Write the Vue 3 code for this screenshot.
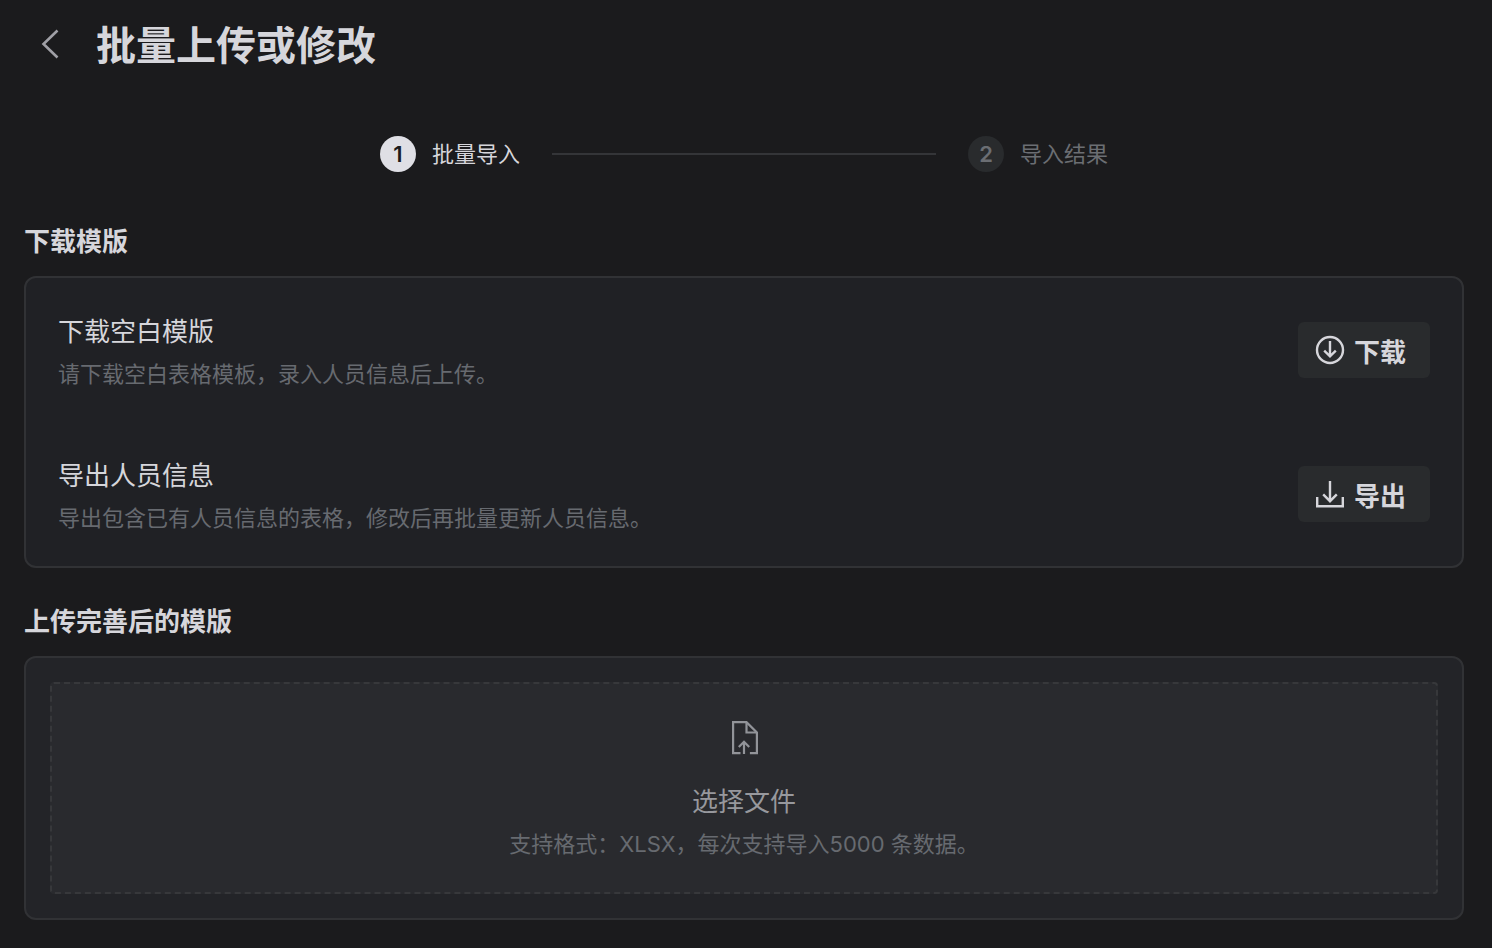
<template>
  <div class="page">
    <header class="pageHeader">
      <button class="backButton" type="button" aria-label="返回">
        <svg class="backIcon" viewBox="0 0 28 32" fill="none">
          <path d="M21.5 2.5 7.5 16l14 13.5" stroke="currentColor" stroke-width="2.6" />
        </svg>
      </button>
      <h1 class="pageTitle">批量上传或修改</h1>
    </header>

    <ol class="steps">
      <li
        v-for="(step, index) in steps"
        :key="step"
        class="step"
        :class="{ active: index === current }"
      >
        <span class="stepNumber">{{ index + 1 }}</span>
        <span class="stepLabel">{{ step }}</span>
      </li>
    </ol>

    <main>
      <section class="section">
        <h2 class="sectionTitle">下载模版</h2>
        <div class="card">
          <div v-for="item in items" :key="item.title" class="item">
            <div class="itemText">
              <h3 class="itemTitle">{{ item.title }}</h3>
              <p class="hint">{{ item.desc }}</p>
            </div>
            <button class="actionButton" type="button">
              <svg
                class="actionIcon"
                viewBox="0 0 32 32"
                fill="none"
                stroke="currentColor"
                stroke-width="2.4"
              >
                <template v-if="item.icon === 'download'">
                  <circle cx="16" cy="16" r="13" />
                  <path d="M16 7v15.5M10.2 16.6l5.8 5.8 5.8-5.8" />
                </template>
                <path v-else d="M16 3v20M9.2 16.4l6.8 6.8 6.8-6.8M3.2 19v9.2h25.6V19" />
              </svg>
              {{ item.action }}
            </button>
          </div>
        </div>
      </section>

      <section class="section">
        <h2 class="sectionTitle">上传完善后的模版</h2>
        <div class="card uploadCard">
          <label class="dropZone" @dragover.prevent @drop.prevent>
            <input class="fileInput" type="file" accept=".xlsx" />
            <svg
              class="fileIcon"
              viewBox="0 0 30 36"
              fill="none"
              stroke="currentColor"
              stroke-width="2.2"
            >
              <path d="M11.5 33.1H4.1V2.1h13.4l10.4 10.4v20.6h-7" />
              <path d="M17.5 2.1v10.4h10.4M15 34V22.5M9.8 27l5.2-5.2 5.2 5.2" />
            </svg>
            <span class="dropTitle">选择文件</span>
            <span class="hint">支持格式：XLSX，每次支持导入5000 条数据。</span>
          </label>
        </div>
      </section>
    </main>
  </div>
</template>

<script setup>
import { ref } from "vue";

const current = ref(0);
const steps = ["批量导入", "导入结果"];

const items = [
  {
    title: "下载空白模版",
    desc: "请下载空白表格模板，录入人员信息后上传。",
    action: "下载",
    icon: "download",
  },
  {
    title: "导出人员信息",
    desc: "导出包含已有人员信息的表格，修改后再批量更新人员信息。",
    action: "导出",
    icon: "export",
  },
];
</script>

<style>
body {
  margin: 0;
  background-color: #1b1b1d;
}
</style>

<style scoped>
.page {
  padding: 16px 28px 28px 24px;
  font-family: Inter, "Noto Sans CJK SC", sans-serif;
  color: #d6d6db;
}

h1,
h2,
h3,
p {
  margin: 0;
}

.pageHeader {
  display: flex;
  align-items: flex-start;
  gap: 32px;
  padding-left: 12px;
}

.backButton {
  display: flex;
  padding: 12px 0;
  border: none;
  background: none;
  color: #a0a0a6;
  cursor: pointer;
}

.backIcon {
  width: 28px;
  height: 32px;
}

.pageTitle {
  font-size: 40px;
  line-height: 60px;
  font-weight: 700;
}

.steps {
  display: flex;
  align-items: center;
  max-width: 728px;
  margin: 60px auto 48px;
  padding: 0;
  list-style: none;
}

.step {
  display: flex;
  align-items: center;
  gap: 16px;
  font-size: 22px;
  line-height: 36px;
  color: #6b6e73;
}

.step:not(:last-child) {
  flex: 1;
}

.step:not(:last-child)::after {
  content: "";
  flex: 1;
  height: 2px;
  margin: 0 32px 0 16px;
  background-color: #343538;
}

.stepNumber {
  width: 36px;
  height: 36px;
  border-radius: 50%;
  background-color: #292b2d;
  text-align: center;
  font-weight: 600;
}

.active {
  color: #d6d6db;
}

.active .stepNumber {
  background-color: #dfdfe5;
  color: #1b1b1d;
}

.section + .section {
  margin-top: 32px;
}

.sectionTitle {
  margin-bottom: 12px;
  font-size: 26px;
  line-height: 44px;
  font-weight: 700;
}

.card {
  border: 2px solid #313235;
  border-radius: 12px;
  background-color: #202125;
}

.item {
  display: flex;
  align-items: center;
  justify-content: space-between;
  padding: 32px;
}

.itemTitle {
  margin-bottom: 4px;
  font-size: 26px;
  line-height: 44px;
  font-weight: 400;
}

.hint {
  font-size: 22px;
  line-height: 32px;
  color: #676a70;
}

.actionButton {
  display: flex;
  align-items: center;
  gap: 8px;
  height: 56px;
  padding: 0 24px 0 16px;
  border: none;
  border-radius: 6px;
  background-color: #292b2d;
  color: inherit;
  font-family: inherit;
  font-size: 26px;
  font-weight: 700;
  cursor: pointer;
}

.actionIcon {
  width: 32px;
  height: 32px;
}

.uploadCard {
  padding: 24px;
  background-color: #232428;
}

.dropZone {
  position: relative;
  display: flex;
  flex-direction: column;
  align-items: center;
  padding: 36px 24px 32px;
  border: 2px dashed #37383b;
  border-radius: 4px;
  background-color: #292a2e;
  cursor: pointer;
}

.fileInput {
  position: absolute;
  width: 1px;
  height: 1px;
  opacity: 0;
}

.fileIcon {
  width: 30px;
  height: 36px;
  margin-bottom: 24px;
  color: #929499;
}

.dropTitle {
  margin-bottom: 4px;
  font-size: 26px;
  line-height: 44px;
  color: #97989d;
}
</style>
